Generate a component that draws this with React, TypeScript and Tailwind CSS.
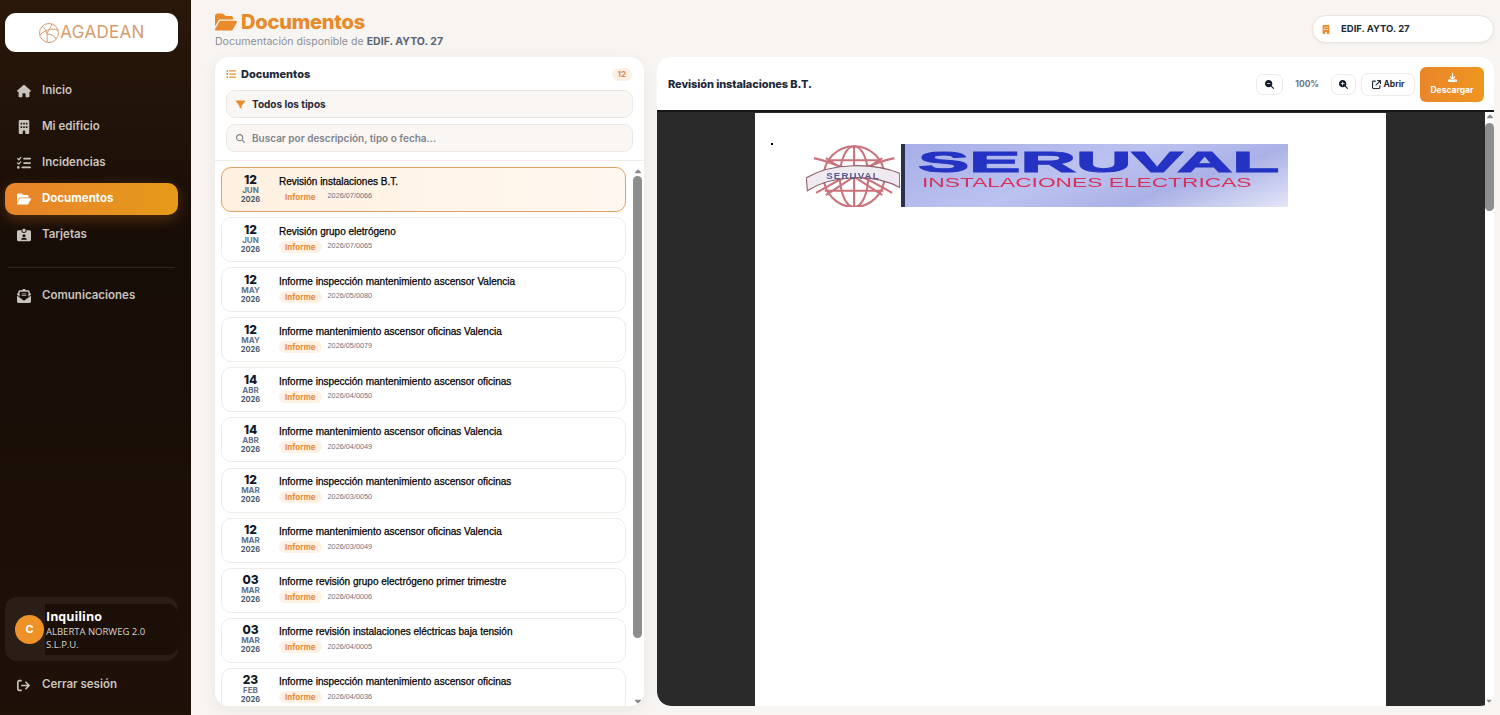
import React from "react";
import {
  FaHouse, FaBuilding, FaListCheck, FaFolderOpen, FaIdCardClip, FaEnvelopeOpenText,
  FaArrowRightFromBracket, FaListUl, FaFilter, FaMagnifyingGlass, FaMagnifyingGlassMinus,
  FaMagnifyingGlassPlus, FaArrowUpRightFromSquare, FaDownload, FaCaretUp, FaCaretDown,
} from "react-icons/fa6";

const font = "font-['Inter','Liberation_Sans',sans-serif]";

const nav = [
  { label: "Inicio", Icon: FaHouse },
  { label: "Mi edificio", Icon: FaBuilding },
  { label: "Incidencias", Icon: FaListCheck },
  { label: "Documentos", Icon: FaFolderOpen, active: true },
  { label: "Tarjetas", Icon: FaIdCardClip },
];

const docs = [
  ["12", "JUN", "Revisión instalaciones B.T.", "2026/07/0066"],
  ["12", "JUN", "Revisión grupo eletrógeno", "2026/07/0065"],
  ["12", "MAY", "Informe inspección mantenimiento ascensor Valencia", "2026/05/0080"],
  ["12", "MAY", "Informe mantenimiento ascensor oficinas Valencia", "2026/05/0079"],
  ["14", "ABR", "Informe inspección mantenimiento ascensor oficinas", "2026/04/0050"],
  ["14", "ABR", "Informe mantenimiento ascensor oficinas Valencia", "2026/04/0049"],
  ["12", "MAR", "Informe inspección mantenimiento ascensor oficinas", "2026/03/0050"],
  ["12", "MAR", "Informe mantenimiento ascensor oficinas Valencia", "2026/03/0049"],
  ["03", "MAR", "Informe revisión grupo electrógeno primer trimestre", "2026/04/0006"],
  ["03", "MAR", "Informe revisión instalaciones eléctricas baja tensión", "2026/04/0005"],
  ["23", "FEB", "Informe inspección mantenimiento ascensor oficinas", "2026/04/0036"],
];

function AgadeanLogo() {
  return (
    <svg width="22" height="22" viewBox="0 0 22 22" fill="none" stroke="#d99a6c" strokeWidth="1">
      <circle cx="11" cy="11" r="9.5" />
      <path d="M4 4c4 3 6 8 5 16M2 13c5-5 11-7 18-5M9 12c4 0 8 2 9 5M14 2c-1 3-3 6-5 9" />
    </svg>
  );
}

function SeruvalGlobe() {
  return (
    <svg width="94" height="63" viewBox="4 3 86 58" fill="none" stroke="#c9747c" strokeWidth="1.9" className="blur-[0.4px]">
      <circle cx="48" cy="33" r="28" />
      <ellipse cx="48" cy="33" rx="13" ry="28" />
      <path d="M24 18h48M21 46h54M22 16l52 34M74 16L22 50M11 16c20 4 52 20 72 32M85 16C65 20 33 36 13 48M48 5v56" />
      <path d="M4 34c24-14 62-14 86-4v13C66 30 28 31 5 46z" fill="#efe9f0" stroke="#8d5d6b" strokeWidth="1" />
      <text x="47" y="35" textAnchor="middle" fontFamily="Liberation Sans, sans-serif" fontWeight="700" fontSize="9" letterSpacing="1" fill="#5a5a90" stroke="none">SERUVAL</text>
    </svg>
  );
}

function DocRow({ d, active }: { d: string[]; active?: boolean }) {
  return (
    <div
      className={`flex h-[45px] shrink-0 items-center rounded-[10px] border pl-[7px] ${
        active ? "border-[#e0a164] bg-gradient-to-r from-[#fff0e0] to-[#fff8f0]" : "border-[#efebe7] bg-white"
      }`}
    >
      <div className={`mt-[-1px] flex w-[43px] shrink-0 flex-col items-center ${font}`}>
        <span className="text-[12px] leading-[12px] font-extrabold text-[#111827]">{d[0]}</span>
        <span className="text-[8px] leading-[8px] font-bold text-[#64748b]">{d[1]}</span>
        <span className="mt-[1px] text-[7.5px] leading-[10px] font-bold text-[#475569]">2026</span>
      </div>
      <div className="ml-[7px] flex min-w-0 flex-col">
        <span className="mt-[-2px] font-['Liberation_Sans',sans-serif] text-[10px] leading-[13px] text-black [-webkit-text-stroke:0.25px_black]">
          {d[2]}
        </span>
        <div className="mt-[3px] flex items-center">
          <span className={`rounded-full bg-[#fff1e3] px-[6px] text-[8px] leading-[12px] font-bold text-[#e58a38] ${font}`}>
            Informe
          </span>
          <span className="ml-[6px] font-['Liberation_Sans',sans-serif] text-[7.3px] text-[#6b7280]">{d[3]}</span>
        </div>
      </div>
    </div>
  );
}

function ScrollBar({ thumb }: { thumb: string }) {
  return (
    <div className="flex w-[9px] shrink-0 flex-col items-center bg-white">
      <FaCaretUp className="h-[10px] w-[10px] shrink-0 text-[#8a8a8a]" />
      <div className={`w-full shrink-0 rounded-full bg-[#8d8d8d] ${thumb}`} />
      <div className="flex-1" />
      <FaCaretDown className="h-[10px] w-[10px] shrink-0 text-[#8a8a8a]" />
    </div>
  );
}

function ZoomBtn({ children, width }: { children: React.ReactNode; width: string }) {
  return (
    <button className={`flex h-[21px] items-center justify-center rounded-[7px] border border-[#efebe7] bg-white text-[9px] text-[#111827] ${width}`}>
      {children}
    </button>
  );
}

export default function App() {
  return (
    <div className={`flex h-[715px] w-[1500px] overflow-hidden bg-[#f7f4f1] ${font}`}>
      <aside className="flex w-[191px] shrink-0 flex-col bg-gradient-to-b from-[#2a180a] via-[#170d07] via-35% to-[#1f1108] pt-[13px] pr-[13px] pb-[14px] pl-[5px]">
        <div className="flex h-[39px] items-center justify-center rounded-[11px] bg-white">
          <AgadeanLogo />
          <span className="text-[17px] leading-none font-normal tracking-[0.3px] text-[#d99a6c]">AGADEAN</span>
        </div>
        <nav className="mt-[23px] flex flex-col gap-[4px]">
          {nav.map(({ label, Icon, active }) => (
            <div
              key={label}
              className={`flex h-[32px] items-center rounded-[10px] pl-[12px] ${
                active
                  ? "bg-gradient-to-r from-[#e8832a] to-[#e59a18] font-bold text-white shadow-[0_4px_14px_rgba(232,131,42,0.28)]"
                  : "font-semibold text-[#c9c3bd]"
              }`}
            >
              <Icon className="h-[14px] w-[14px] shrink-0" />
              <span className="ml-[11px] text-[11.5px]">{label}</span>
            </div>
          ))}
        </nav>
        <div className="mx-[3px] mt-[16px] h-px bg-[#33261c]" />
        <div className="mt-[12px] flex h-[32px] items-center pl-[12px] font-semibold text-[#c9c3bd]">
          <FaEnvelopeOpenText className="h-[14px] w-[14px] shrink-0" />
          <span className="ml-[11px] text-[11.5px]">Comunicaciones</span>
        </div>
        <div className="mt-auto flex h-[64px] items-center rounded-[12px] bg-[#2a1e16] pl-[10px]">
          <div className="flex h-[29px] w-[29px] shrink-0 items-center justify-center rounded-full bg-[#ee9227] text-[11px] font-bold text-white">
            C
          </div>
          <div className="ml-[1px] flex h-[51px] flex-1 flex-col justify-center rounded-r-[10px] bg-[#1b0f08] pl-[1px] font-['Open_Sans',sans-serif]">
            <span className="text-[12.5px] leading-[17px] font-bold text-white">Inquilino</span>
            <span className="text-[9.5px] leading-[13px] text-[#d8d4d0]">ALBERTA NORWEG 2.0<br />S.L.P.U.</span>
          </div>
        </div>
        <div className="mt-[8px] flex h-[32px] items-center pl-[12px] font-semibold text-[#c9c3bd]">
          <FaArrowRightFromBracket className="h-[13px] w-[13px] shrink-0" />
          <span className="ml-[12px] text-[11.5px]">Cerrar sesión</span>
        </div>
      </aside>

      <main className="flex min-w-0 flex-1 flex-col pt-[11px] pr-[6px] pb-[9px] pl-[24px]">
        <header className="flex h-[46px] shrink-0 items-start justify-between">
          <div>
            <div className="flex items-center gap-[4px] text-[#e8892a]">
              <FaFolderOpen className="h-[20px] w-[22px]" />
              <h1 className="text-[20px] leading-[22px] font-extrabold tracking-[-0.2px]">Documentos</h1>
            </div>
            <p className="mt-[2px] text-[10.5px] leading-[14px] tracking-[0.04px] text-[#8a8f98]">
              Documentación disponible de <b className="font-bold text-[#5b6472]">EDIF. AYTO. 27</b>
            </p>
          </div>
          <div className="mt-[4px] flex h-[28px] w-[182px] items-center rounded-full border border-[#e9e3dd] bg-white pl-[9px] text-[#e8892a] shadow-[0_1px_3px_rgba(0,0,0,0.05)]">
            <FaBuilding className="h-[9px] w-[8px]" />
            <span className="ml-[11px] text-[9.5px] font-bold text-[#1f2937]">EDIF. AYTO. 27</span>
          </div>
        </header>

        <div className="flex min-h-0 flex-1 gap-[13px]">
          <section className="flex w-[429px] shrink-0 flex-col overflow-hidden rounded-[14px] bg-white shadow-[0_4px_16px_rgba(60,40,20,0.06)]">
            <div className="h-[104px] shrink-0 border-b border-[#f0ece8] px-[11px] pt-[8px]">
              <div className="flex h-[18px] items-center">
                <FaListUl className="h-[10px] w-[10px] text-[#e8892a]" />
                <span className="ml-[5px] text-[11px] font-extrabold text-[#1f2937]">Documentos</span>
                <span className="mr-[1px] ml-auto rounded-full bg-[#fdf0e3] px-[6px] text-[8px] leading-[13px] font-bold text-[#d98a45]">12</span>
              </div>
              <div className="mt-[7px] flex h-[28px] items-center rounded-[9px] border border-[#ece7e2] bg-[#faf6f3] pl-[9px]">
                <FaFilter className="h-[9px] w-[9px] text-[#e8892a]" />
                <span className="ml-[7px] text-[10px] font-bold text-[#1f2937]">Todos los tipos</span>
              </div>
              <div className="mt-[6px] flex h-[28px] items-center rounded-[9px] border border-[#ece7e2] bg-[#faf6f3] pl-[9px]">
                <FaMagnifyingGlass className="h-[9px] w-[9px] text-[#7c7f86]" />
                <span className="ml-[7px] text-[10px] font-semibold text-[#80848b]">Buscar por descripción, tipo o fecha...</span>
              </div>
            </div>
            <div className="flex min-h-0 flex-1 pt-[6px] pr-[2px] pl-[6px]">
              <div className="flex min-w-0 flex-1 flex-col gap-[5.1px] overflow-hidden pr-[7px]">
                {docs.map((d, i) => (
                  <DocRow key={i} d={d} active={i === 0} />
                ))}
              </div>
              <ScrollBar thumb="h-[462px] mt-[-1px]" />
            </div>
          </section>

          <section className="flex min-w-0 flex-1 flex-col overflow-hidden rounded-[14px] bg-white">
            <div className="flex h-[55px] shrink-0 items-center border-b-[2px] border-[#161616] pt-[2px] pr-[10px] pl-[11px]">
              <span className="text-[11px] font-extrabold tracking-[-0.1px] text-[#1f2937]">Revisión instalaciones B.T.</span>
              <div className="ml-auto flex items-center">
                <ZoomBtn width="w-[27px]"><FaMagnifyingGlassMinus /></ZoomBtn>
                <span className="mx-[12px] text-[8.5px] font-bold text-[#64748b]">100%</span>
                <ZoomBtn width="w-[25px]"><FaMagnifyingGlassPlus /></ZoomBtn>
                <button className="ml-[5px] flex h-[23px] w-[54px] items-center justify-center gap-[3px] rounded-[7px] border border-[#efebe7] bg-white text-[8.5px] font-bold text-[#1f2937]">
                  <FaArrowUpRightFromSquare className="h-[9px] w-[9px]" />Abrir
                </button>
                <button className="ml-[5px] flex h-[35px] w-[64px] flex-col items-center justify-center rounded-[6px] bg-gradient-to-r from-[#ea852a] to-[#ee961f] text-[8.5px] font-bold text-white">
                  <FaDownload className="mb-[2px] h-[9px] w-[9px]" />Descargar
                </button>
              </div>
            </div>
            <div className="flex min-h-0 flex-1">
              <div className="flex min-w-0 flex-1 justify-center rounded-bl-[14px] bg-[#2a2a2a] pr-[1px]">
                <div className="mt-px w-[631px] bg-white">
                  <div className="ml-[16px] flex pt-[31px]">
                    <span className="mt-[-1px] h-[2px] w-[2px] bg-black" />
                    <div className="ml-[33px]"><SeruvalGlobe /></div>
                    <div className="ml-[1px] h-[63px] w-[387px] overflow-hidden border-l-[4px] border-[#2a3050] bg-[linear-gradient(160deg,#a7aee8_0%,#bcc2ef_45%,#aab1e6_70%,#e4e6f8_100%)] pt-[4px] pl-[13px] font-['Liberation_Sans',sans-serif]">
                      <div className="origin-left [transform:scaleX(2.56)] text-[30px] leading-[28px] font-bold text-[#2433c4] [-webkit-text-stroke:1px_#2433c4] blur-[0.3px]">SERUVAL</div>
                      <div className="ml-[4px] origin-left [transform:scaleX(1.82)] text-[12.5px] leading-[14px] text-[#d8305a] blur-[0.2px]">INSTALACIONES ELECTRICAS</div>
                    </div>
                  </div>
                </div>
              </div>
              <ScrollBar thumb="h-[88px] mt-[1px]" />
            </div>
          </section>
        </div>
      </main>
    </div>
  );
}
